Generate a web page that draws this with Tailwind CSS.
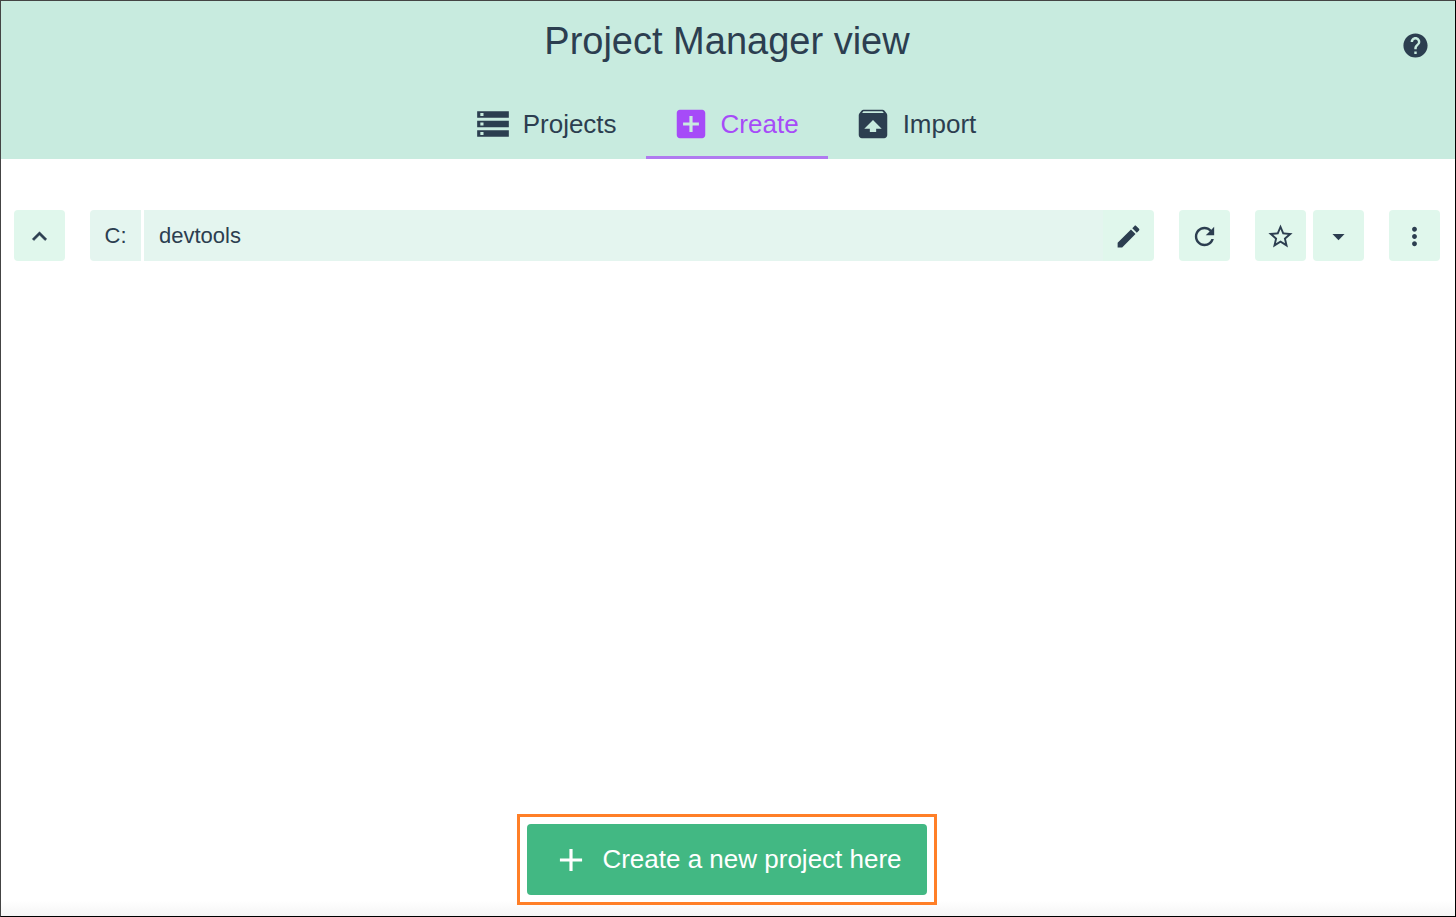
<!DOCTYPE html>
<html lang="en">
<head>
  <meta charset="UTF-8" />
  <meta name="viewport" content="width=device-width, initial-scale=1.0" />
  <title>Project Manager view</title>
  <script src="https://cdn.jsdelivr.net/npm/@tailwindcss/browser@4"></script>
</head>
<body class="min-h-screen flex flex-col bg-white text-[#2c3e50] font-['Liberation_Sans',Arial,sans-serif] border border-t-[#444] border-l-[#444] border-r-black border-b-black">

  <header class="bg-[#c8ebdf]">
    <div class="grid grid-cols-[1fr_auto_1fr] items-center h-[88px] pl-[23px] pr-[25px]">
      <h1 class="col-start-2 text-[38px] leading-[44px] pb-2">Project Manager view</h1>
      <button type="button" aria-label="Help" class="justify-self-end">
        <svg class="size-[29px]" viewBox="0 0 24 24" fill="currentColor"><path d="M12 2C6.48 2 2 6.48 2 12s4.48 10 10 10 10-4.48 10-10S17.52 2 12 2zm1 17h-2v-2h2v2zm2.070-7.750-.9.920C13.450 12.900 13 13.500 13 15h-2v-.5c0-1.100.450-2.100 1.170-2.830l1.240-1.260c.370-.360.590-.860.590-1.410 0-1.100-.9-2-2-2s-2 .9-2 2H8c0-2.210 1.790-4 4-4s4 1.790 4 4c0 .880-.360 1.680-.930 2.250z"/></svg>
      </button>
    </div>
    <nav class="flex justify-center h-[70px] pr-[3px] text-[26px]">
      <a href="#projects" class="flex items-center gap-[11px] pt-[3px] pl-[26px] pr-[29px] border-b-3 border-transparent">
        <svg class="size-[38px]" viewBox="0 0 24 24" fill="currentColor"><path d="M2 20h20v-4H2v4zm2-3h2v2H4v-2zM2 4v4h20V4H2zm4 3H4V5h2v2zm-4 7h20v-4H2v4zm2-3h2v2H4v-2z"/></svg>
        <span>Projects</span>
      </a>
      <a href="#create" aria-current="page" class="flex items-center gap-[11px] pt-[3px] pl-[26px] pr-[29px] border-b-3 border-[#b07af0] text-[#a64bf8]">
        <svg class="size-[38px]" viewBox="0 0 24 24" fill="currentColor"><path d="M19 3H5c-1.110 0-2 .9-2 2v14c0 1.100.890 2 2 2h14c1.100 0 2-.9 2-2V5c0-1.100-.9-2-2-2zm-2 10h-4v4h-2v-4H7v-2h4V7h2v4h4v2z"/></svg>
        <span>Create</span>
      </a>
      <a href="#import" class="flex items-center gap-[11px] pt-[3px] pl-[26px] pr-[29px] border-b-3 border-transparent">
        <svg class="size-[38px]" viewBox="0 0 24 24" fill="currentColor"><path d="M20.550 5.220l-1.390-1.680C18.880 3.210 18.470 3 18 3H6c-.470 0-.880.210-1.150.550L3.460 5.220C3.170 5.570 3 6.010 3 6.500V19c0 1.100.890 2 2 2h14c1.100 0 2-.9 2-2V6.500c0-.490-.170-.930-.450-1.280zM12 9.500l5.500 5.500H14v2h-4v-2H6.500L12 9.500zM5.120 5l.820-1h12l.930 1H5.120z"/></svg>
        <span>Import</span>
      </a>
    </nav>
  </header>

  <main class="flex-1 flex flex-col">
    <!-- path toolbar -->
    <div class="flex gap-[25px] pt-[51px] pl-[13px] pr-[15px]">
      <button type="button" aria-label="Parent folder" class="size-[51px] pt-px shrink-0 flex items-center justify-center rounded bg-[#e0f7ec]">
        <svg class="size-[29px]" viewBox="0 0 24 24" fill="currentColor" stroke="currentColor" stroke-width=".4"><path d="M7.410 15.410L12 10.830l4.590 4.580L18 14l-6-6-6 6z"/></svg>
      </button>

      <div class="flex-1 flex h-[51px] text-[22px] rounded overflow-hidden">
        <button type="button" class="w-[51px] mr-[3px] bg-[#e4f5ef]">C:</button>
        <div class="flex-1 flex bg-[#e4f5ef]">
          <button type="button" class="px-[15px]">devtools</button>
        </div>
        <button type="button" aria-label="Edit path" class="w-[51px] pt-px flex items-center justify-center bg-[#e0f7ec]">
          <svg class="size-[29px]" viewBox="0 0 24 24" fill="currentColor"><path d="M3 17.250V21h3.750L17.810 9.940l-3.750-3.750L3 17.250zM20.710 7.040c.390-.390.390-1.020 0-1.410l-2.340-2.340c-.390-.390-1.020-.390-1.410 0l-1.830 1.830 3.750 3.750 1.830-1.830z"/></svg>
        </button>
      </div>

      <button type="button" aria-label="Refresh" class="size-[51px] pt-px shrink-0 flex items-center justify-center rounded bg-[#e0f7ec]">
        <svg class="size-[29px]" viewBox="0 0 24 24" fill="currentColor"><path d="M17.650 6.350C16.200 4.900 14.210 4 12 4c-4.420 0-7.990 3.580-7.990 8s3.570 8 7.990 8c3.730 0 6.840-2.550 7.730-6h-2.080c-.820 2.330-3.040 4-5.650 4-3.310 0-6-2.690-6-6s2.690-6 6-6c1.660 0 3.140.690 4.220 1.780L13 11h7V4l-2.350 2.350z"/></svg>
      </button>

      <div class="flex gap-[7px]">
        <button type="button" aria-label="Add to favorites" class="size-[51px] pt-px flex items-center justify-center rounded bg-[#e0f7ec]">
          <svg class="size-[29px]" viewBox="0 0 24 24" fill="currentColor"><path d="M22 9.240l-7.190-.620L12 2 9.190 8.630 2 9.240l5.460 4.730L5.820 21 12 17.270 18.180 21l-1.630-7.030L22 9.240zM12 15.400l-3.760 2.270 1-4.280-3.320-2.880 4.380-.380L12 6.100l1.710 4.040 4.380.380-3.320 2.880 1 4.280L12 15.400z"/></svg>
        </button>
        <button type="button" aria-label="Favorites" class="size-[51px] pt-px flex items-center justify-center rounded bg-[#e0f7ec]">
          <svg class="size-[29px]" viewBox="0 0 24 24" fill="currentColor"><path d="M7 10l5 5 5-5z"/></svg>
        </button>
      </div>

      <button type="button" aria-label="More" class="size-[51px] pt-px shrink-0 flex items-center justify-center rounded bg-[#e0f7ec]">
        <svg class="size-[29px]" viewBox="0 0 24 24" fill="currentColor"><path d="M12 8c1.100 0 2-.9 2-2s-.9-2-2-2-2 .9-2 2 .9 2 2 2zm0 2c-1.100 0-2 .9-2 2s.9 2 2 2 2-.9 2-2-.9-2-2-2zm0 6c-1.100 0-2 .9-2 2s.9 2 2 2 2-.9 2-2-.9-2-2-2z"/></svg>
      </button>
    </div>

    <div class="mt-auto flex justify-center pb-[11px] pr-[2px] bg-linear-to-b from-white from-85% to-[#f5f5f5]">
      <div class="border-3 border-[#ff7f27] p-[7px] bg-white">
        <button type="button" class="flex items-center gap-[12px] h-[71px] px-[25px] rounded bg-[#42b883] text-white text-[26px]">
          <svg class="size-[38px]" viewBox="0 0 24 24" fill="currentColor"><path d="M19 13h-6v6h-2v-6H5v-2h6V5h2v6h6v2z"/></svg>
          <span>Create a new project here</span>
        </button>
      </div>
    </div>
  </main>

</body>
</html>
